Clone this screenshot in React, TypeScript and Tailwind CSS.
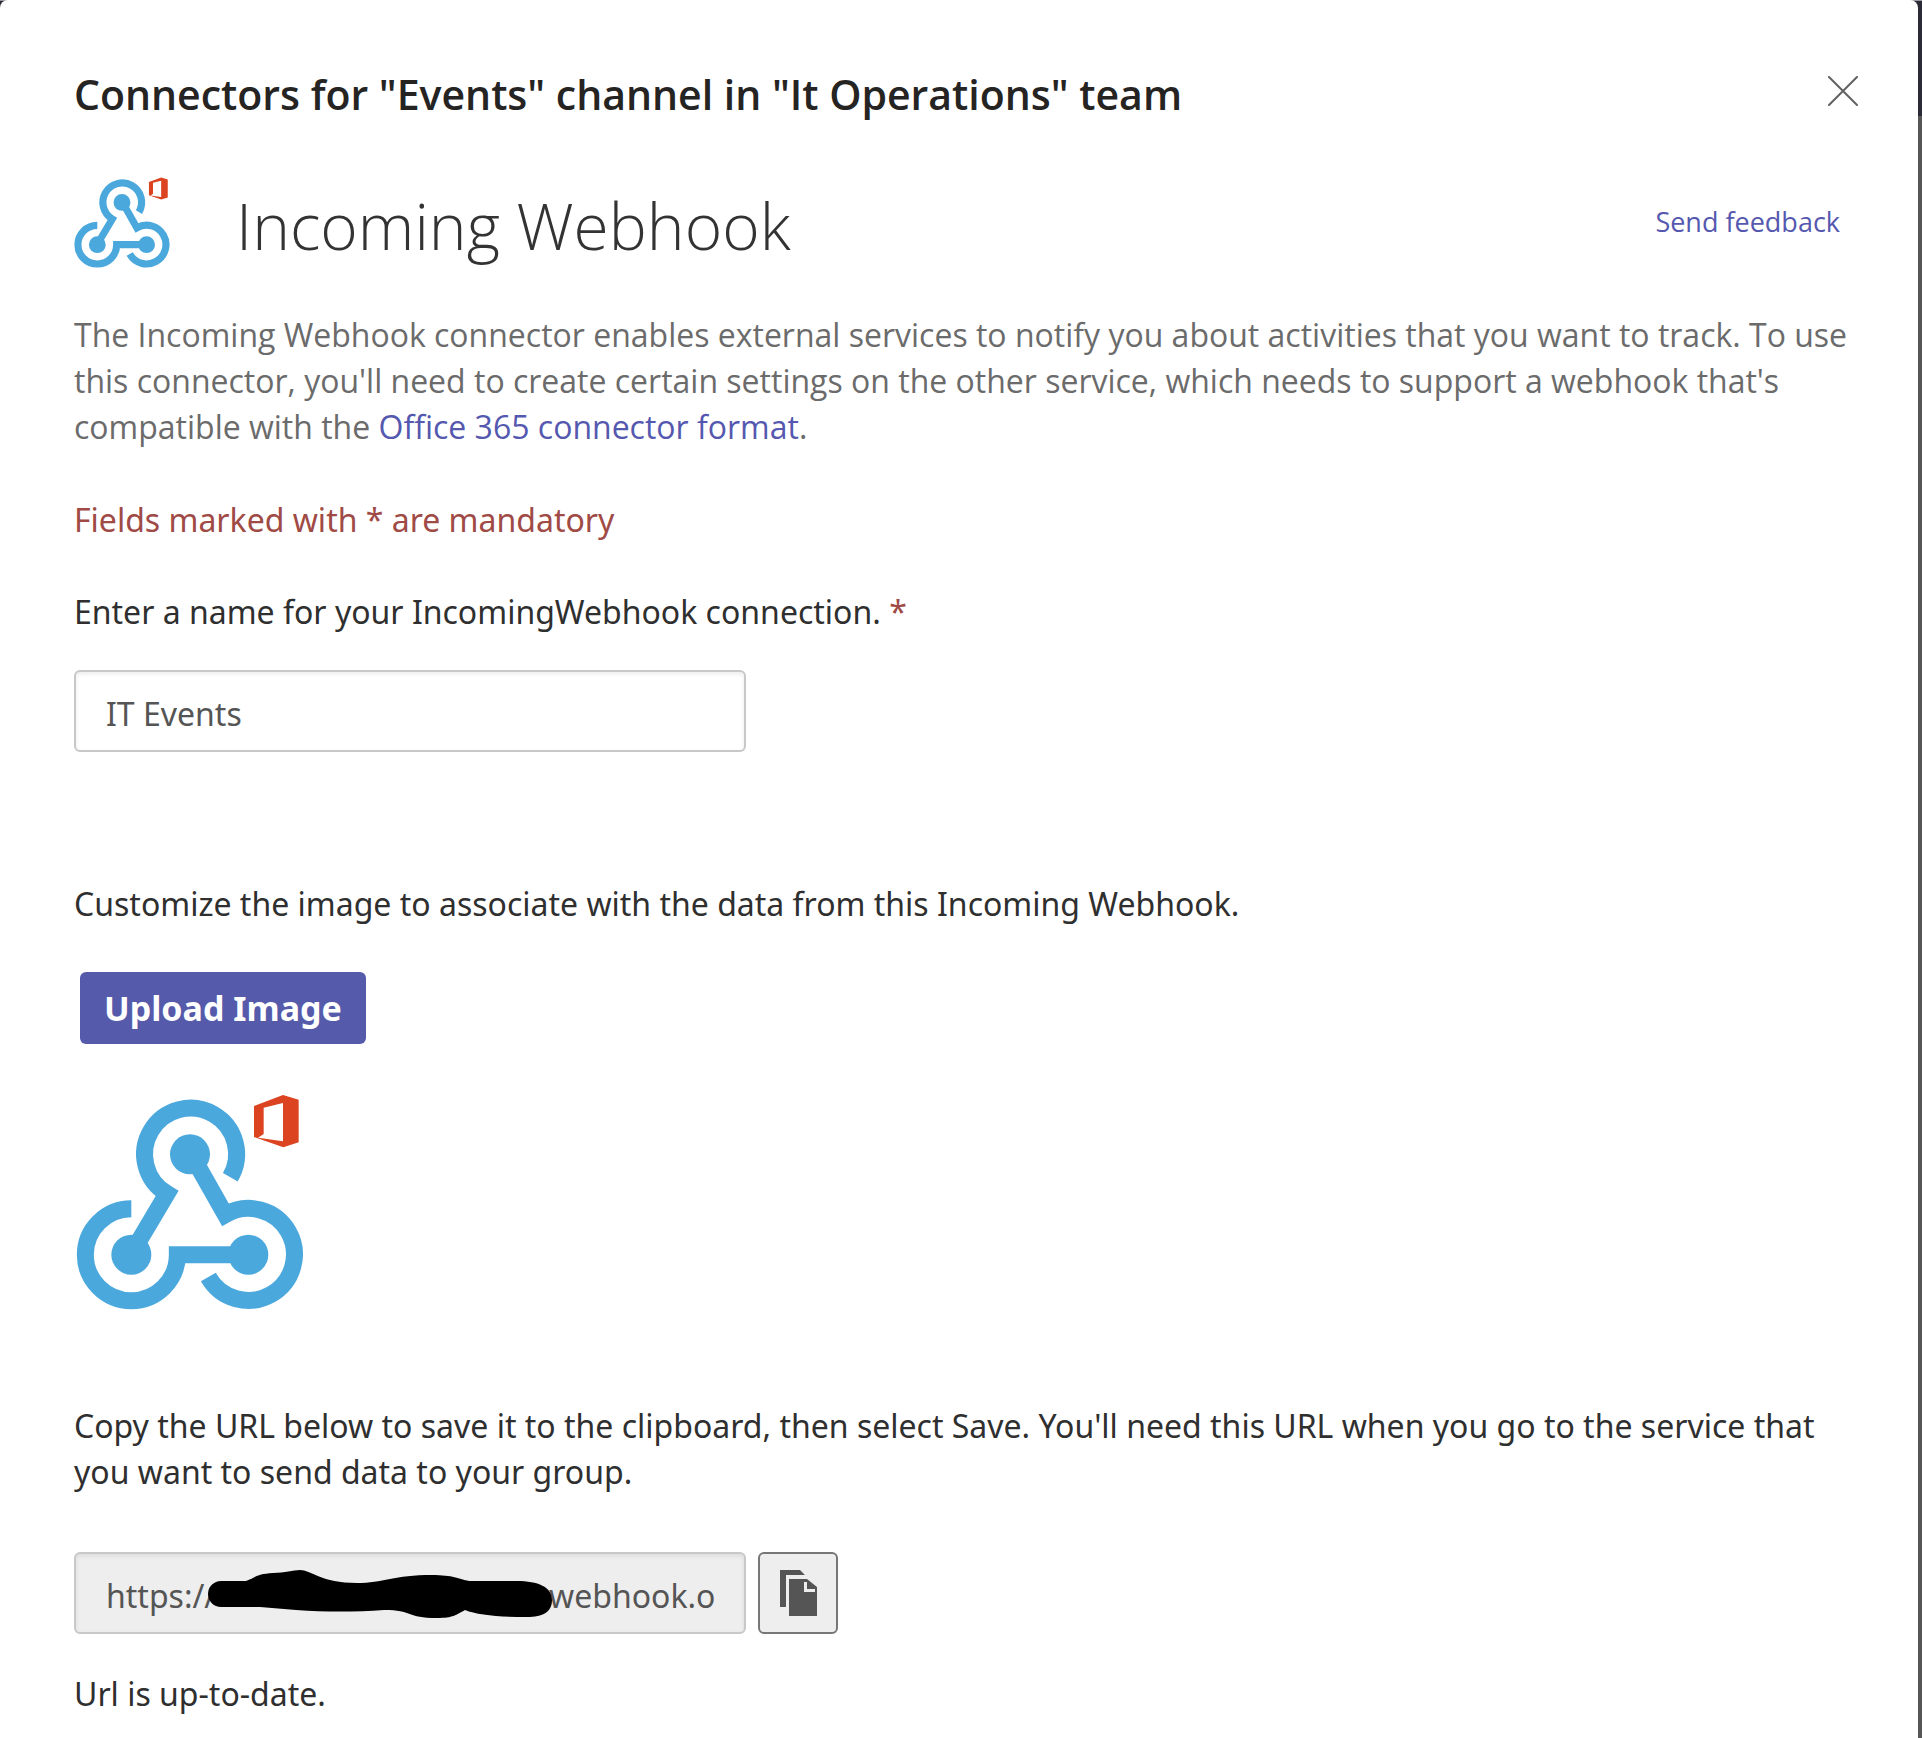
const hiddenHost = "\u00a0".repeat(40);

function WebhookLogo({ className }: { className: string }) {
  return (
    <svg viewBox="48 44 684 646" className={className} role="img" aria-label="Incoming Webhook logo">
      <g fill="none" stroke="#4ba8dd" strokeWidth="51">
        <path d="M214 387A138 138 0 1 0 352 525H540" />
        <path d="M511 293A138 138 0 1 0 321 342L232 492" />
        <path d="M415 262L496 405A138 138 0 1 1 445 592" />
      </g>
      <g fill="#4ba8dd">
        <circle cx="214" cy="525" r="60" />
        <circle cx="390" cy="224" r="60" />
        <circle cx="565" cy="525" r="60" />
      </g>
      <path
        fill="#dc4421"
        fillRule="evenodd"
        d="M582 79L669 46L716 60V188L670 203L582 172ZM611 84V163L594 174L669 185V70Z"
      />
    </svg>
  );
}

export default function App() {
  return (
    <div className="flex min-h-screen flex-col bg-[linear-gradient(to_bottom,#99999f_1px,#2b2b38_1px,#2b2b38_116px,#555655_116px)] pr-1 text-[#2f2f2f]">
      <main className='flex-1 rounded-t-lg bg-white px-[74px] pb-5 pt-[67px] font-["Noto_Sans",sans-serif] text-[32px] leading-[46px]'>
        <header className="flex items-start justify-between">
          <h1 className='font-["Open_Sans",sans-serif] text-[41px] font-semibold leading-[54px] text-[#252423]'>
            Connectors for "Events" channel in "It Operations" team
          </h1>
          <button type="button" aria-label="Close" className="-mr-3.5 mt-[9px] p-0">
            <svg viewBox="0 0 30 30" className="size-[30px]" fill="none" stroke="#616161" strokeWidth="2" strokeLinecap="round">
              <path d="M1 1L29 29M29 1L1 29" />
            </svg>
          </button>
        </header>

        <div className='mt-[55px] flex items-start font-["Open_Sans",sans-serif]'>
          <WebhookLogo className="mt-px h-[91px] w-24" />
          <h2 className="ml-[66px] text-[64px] font-light leading-[100px] text-[#333]">Incoming Webhook</h2>
          <a href="#feedback" className="ml-auto mr-1 mt-[26px] text-[27px] leading-10 text-[#5558af]">
            Send feedback
          </a>
        </div>

        <p className='-mr-3 mt-9 font-["Open_Sans",sans-serif] text-[#6b6b6b]'>
          The Incoming Webhook connector enables external services to notify you about activities that you want to track. To use
          this connector, you'll need to create certain settings on the other service, which needs to support a webhook that's
          compatible with the{" "}
          <a href="#format" className="text-[#5558af]">
            Office 365 connector format
          </a>
          .
        </p>

        <p className="mt-[47px] text-[#a04a46]">Fields marked with * are mandatory</p>

        <label htmlFor="name" className="mt-[46px] block">
          Enter a name for your IncomingWebhook connection. <span className="text-[#a04a46]">*</span>
        </label>
        <input
          id="name"
          type="text"
          defaultValue="IT Events"
          className="mt-[35px] block h-[82px] w-[672px] rounded-md border-2 border-[#c8c8c8] bg-white px-[30px] pt-1 text-[#555] shadow-[inset_0_2px_4px_#00000014]"
        />

        <p className="mt-[129px]">Customize the image to associate with the data from this Incoming Webhook.</p>
        <button type="button" className="ml-1.5 mt-[45px] block h-[72px] rounded-md bg-[#555aaa] px-6 text-[34px] font-bold text-white">
          Upload Image
        </button>
        <WebhookLogo className="ml-0.5 mt-[50px] h-[216px] w-[228px]" />

        <p className="mt-[93px]">
          Copy the URL below to save it to the clipboard, then select Save. You'll need this URL when you go to the service that
          you want to send data to your group.
        </p>

        <div className="mt-[57px] flex gap-3">
          <div className="relative w-[672px]">
            <input
              type="text"
              readOnly
              aria-label="Webhook URL"
              defaultValue={`https://${hiddenHost}webhook.o`}
              className="h-[82px] w-full rounded-md border-2 border-[#c8c8c8] bg-[#eee] px-[30px] pt-1 text-[#555] shadow-[inset_0_2px_4px_#00000014]"
            />
            <svg viewBox="0 0 346 50" className="absolute left-[133px] top-[17px] h-[50px] w-[346px]" aria-hidden="true">
              <path d="M14 12L39 12C49 8 50 5 66 4C78 4 86 1 93 1C104 1 114 14 150 14C176 14 187 6 225 6C246 6 252 10 262 12H310C331 12 345 18 345 31C345 43 336 48 320 48C292 48 270 46 258 41C249 46 246 49 230 49C199 49 206 41 177 41C148 43 119 43 89 41L53 38L14 38A13 13 0 0 1 14 12Z" />
            </svg>
          </div>
          <button
            type="button"
            aria-label="Copy URL"
            className="flex h-[82px] w-20 items-center justify-center rounded-md border-2 border-[#777] bg-[#eee]"
          >
            <svg viewBox="0 0 37 46" className="h-[46px] w-[37px]" fill="#555">
              <path d="M0 0H20L25 5H6V37H0Z" />
              <path fillRule="evenodd" d="M9 9H27L37 17V46H9ZM24 12V22H35V19H27V12Z" />
            </svg>
          </button>
        </div>
        <p className="mt-[37px]">Url is up-to-date.</p>
      </main>
    </div>
  );
}
